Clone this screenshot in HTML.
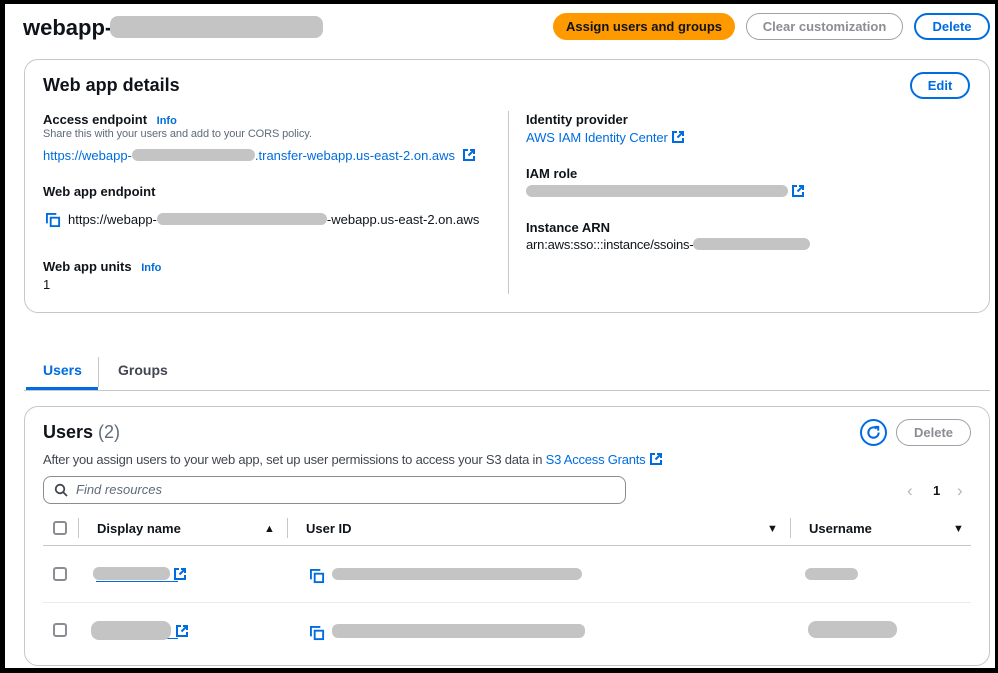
<!DOCTYPE html>
<html><head><meta charset="utf-8"><style>
*{box-sizing:border-box;margin:0;padding:0}
body{width:998px;height:673px;background:#000;position:relative;overflow:hidden;font-family:"Liberation Sans",sans-serif;color:#0f141a}
#pg{position:absolute;left:5px;top:4px;width:990px;height:664px;background:#fff}
.a{position:absolute;white-space:nowrap}
.b{font-weight:bold}
.lk{color:#006ce0}
.gr{position:absolute;background:#c4c4c4;border-radius:6px}
.ig{display:inline-block;background:#c4c4c4;border-radius:6px;height:12px;vertical-align:-1px}
.card{position:absolute;border:1px solid #c6c6cd;border-radius:14px;background:#fff}
.btn{position:absolute;border-radius:16px;font-weight:bold;font-size:13px;text-align:center;line-height:25px}
.ext{position:absolute;width:12px;height:12px}
.cb{position:absolute;width:14px;height:14px;border:2px solid #8c8c94;border-radius:3px}
.vd{position:absolute;width:1px;background:#c6c6cd}
</style></head><body>
<svg width="0" height="0" style="position:absolute"><defs>
<symbol id="ex" viewBox="0 0 12 12"><path d="M5 1H1v10h10V7" fill="none" stroke="#006ce0" stroke-width="2"/><path d="M7 1h4v4M11 1L5.5 6.5" fill="none" stroke="#006ce0" stroke-width="2"/></symbol>
<symbol id="cp" viewBox="0 0 16 16"><path d="M1 11V1h10" fill="none" stroke="#006ce0" stroke-width="2"/><rect x="5" y="5" width="9" height="9" fill="none" stroke="#006ce0" stroke-width="2"/></symbol>
</defs></svg>
<div id="pg">
<div class="a b" style="left:18px;top:11px;font-size:22px">webapp-</div>
<div class="gr" style="left:105px;top:12px;width:213px;height:22px;border-radius:8px"></div>
<div class="btn" style="left:548px;top:9px;width:182px;height:27px;background:#ff9900;color:#0f141a;line-height:27px">Assign users and groups</div>
<div class="btn" style="left:741px;top:9px;width:157px;height:27px;border:1px solid #a0a0a8;color:#8c8c94;line-height:25px">Clear customization</div>
<div class="btn" style="left:909px;top:9px;width:76px;height:27px;border:2px solid #006ce0;color:#006ce0;line-height:23px">Delete</div>

<div class="card" style="left:19px;top:55px;width:966px;height:254px"></div>
<div class="a b" style="left:38px;top:71px;font-size:18px">Web app details</div>
<div class="btn" style="left:905px;top:68px;width:60px;height:27px;border:2px solid #006ce0;color:#006ce0;line-height:23px">Edit</div>
<div class="a b" style="left:38px;top:108px;font-size:13px">Access endpoint <span class="lk" style="font-size:11px;margin-left:6px">Info</span></div>
<div class="a" style="left:38px;top:124px;font-size:11px;color:#5f6b7a;letter-spacing:-0.1px">Share this with your users and add to your CORS policy.</div>
<div class="a lk" style="left:38px;top:144px;font-size:13px">https://webapp-<span class="ig" style="width:123px"></span>.transfer-webapp.us-east-2.on.aws</div>
<svg class="ext" style="left:458px;top:145px"><use href="#ex"/></svg>
<div class="a b" style="left:38px;top:180px;font-size:13px">Web app endpoint</div>
<svg style="position:absolute;left:41px;top:209px;width:15px;height:15px"><use href="#cp"/></svg>
<div class="a" style="left:63px;top:208px;font-size:13px">https://webapp-<span class="ig" style="width:170px"></span>-webapp.us-east-2.on.aws</div>
<div class="a b" style="left:38px;top:255px;font-size:13px">Web app units <span class="lk" style="font-size:11px;margin-left:6px">Info</span></div>
<div class="a" style="left:38px;top:273px;font-size:13px">1</div>
<div class="vd" style="left:503px;top:107px;height:183px"></div>
<div class="a b" style="left:521px;top:108px;font-size:13px">Identity provider</div>
<div class="a lk" style="left:521px;top:126px;font-size:13px;letter-spacing:-0.1px">AWS IAM Identity Center</div>
<svg class="ext" style="left:667px;top:127px"><use href="#ex"/></svg>
<div class="a b" style="left:521px;top:162px;font-size:13px">IAM role</div>
<div class="gr" style="left:521px;top:181px;width:262px;height:12px"></div>
<svg class="ext" style="left:787px;top:181px"><use href="#ex"/></svg>
<div class="a b" style="left:521px;top:216px;font-size:13px">Instance ARN</div>
<div class="a" style="left:521px;top:233px;font-size:13px;letter-spacing:-0.2px">arn:aws:sso:::instance/ssoins-<span class="ig" style="width:117px"></span></div>

<div class="a b" style="left:38px;top:358px;font-size:14px;color:#006ce0">Users</div>
<div class="a b" style="left:113px;top:358px;font-size:14px;color:#424650">Groups</div>
<div class="vd" style="left:93px;top:353px;height:30px"></div>
<div style="position:absolute;left:19px;top:386px;width:966px;height:1px;background:#c6c6cd"></div>
<div style="position:absolute;left:21px;top:383px;width:72px;height:3px;background:#006ce0"></div>

<div class="card" style="left:19px;top:402px;width:966px;height:260px"></div>
<div class="a b" style="left:38px;top:418px;font-size:18px">Users <span style="font-weight:normal;color:#5f6b7a">(2)</span></div>
<div style="position:absolute;left:855px;top:415px;width:27px;height:27px;border:2px solid #006ce0;border-radius:50%"></div>
<svg style="position:absolute;left:861px;top:421px;width:15px;height:15px" viewBox="0 0 16 16"><path d="M13.5 8A5.5 5.5 0 1 1 11.5 3.8" fill="none" stroke="#006ce0" stroke-width="2.2"/><path d="M9 2h4v4" fill="none" stroke="#006ce0" stroke-width="2.2"/></svg>
<div class="btn" style="left:891px;top:415px;width:75px;height:27px;border:1px solid #a0a0a8;color:#8c8c94">Delete</div>
<div class="a" style="left:38px;top:448px;font-size:13px;color:#424650;letter-spacing:-0.22px">After you assign users to your web app, set up user permissions to access your S3 data in <span class="lk">S3 Access Grants</span></div>
<svg class="ext" style="left:645px;top:449px"><use href="#ex"/></svg>
<div style="position:absolute;left:38px;top:472px;width:583px;height:28px;border:1px solid #8c8c94;border-radius:8px"></div>
<svg style="position:absolute;left:49px;top:479px;width:14px;height:14px" viewBox="0 0 14 14"><circle cx="6" cy="6" r="4.3" fill="none" stroke="#424650" stroke-width="1.8"/><path d="M9 9l4 4" stroke="#424650" stroke-width="1.8"/></svg>
<div class="a" style="left:71px;top:478px;font-size:13px;font-style:italic;color:#5f6b7a">Find resources</div>
<div class="a" style="left:902px;top:477px;font-size:17px;color:#b4b4bb">‹</div>
<div class="a b" style="left:928px;top:479px;font-size:13px">1</div>
<div class="a" style="left:952px;top:477px;font-size:17px;color:#b4b4bb">›</div>

<div class="cb" style="left:48px;top:517px"></div>
<div class="vd" style="left:73px;top:514px;height:20px"></div>
<div class="a b" style="left:92px;top:517px;font-size:13px">Display name</div>
<div class="a" style="left:259px;top:519px;font-size:11px">▲</div>
<div class="vd" style="left:282px;top:514px;height:20px"></div>
<div class="a b" style="left:301px;top:517px;font-size:13px">User ID</div>
<div class="a" style="left:762px;top:519px;font-size:11px">▼</div>
<div class="vd" style="left:785px;top:514px;height:20px"></div>
<div class="a b" style="left:804px;top:517px;font-size:13px">Username</div>
<div class="a" style="left:948px;top:519px;font-size:11px">▼</div>
<div style="position:absolute;left:38px;top:541px;width:928px;height:1px;background:#c6c6cd"></div>
<div style="position:absolute;left:38px;top:598px;width:928px;height:1px;background:#e9ebed"></div>

<div class="cb" style="left:48px;top:563px"></div>
<div style="position:absolute;left:91px;top:577px;width:82px;height:1px;background:#006ce0"></div>
<div class="gr" style="left:88px;top:563px;width:77px;height:13px"></div>
<svg class="ext" style="left:169px;top:564px"><use href="#ex"/></svg>
<svg style="position:absolute;left:305px;top:565px;width:15px;height:15px"><use href="#cp"/></svg>
<div class="gr" style="left:327px;top:564px;width:250px;height:12px"></div>
<div class="gr" style="left:800px;top:564px;width:53px;height:12px"></div>

<div class="cb" style="left:48px;top:619px"></div>
<div style="position:absolute;left:91px;top:634px;width:82px;height:1px;background:#006ce0"></div>
<div class="gr" style="left:86px;top:617px;width:80px;height:19px;border-radius:8px"></div>
<svg class="ext" style="left:171px;top:621px"><use href="#ex"/></svg>
<svg style="position:absolute;left:305px;top:622px;width:15px;height:15px"><use href="#cp"/></svg>
<div class="gr" style="left:327px;top:620px;width:253px;height:14px"></div>
<div class="gr" style="left:803px;top:617px;width:89px;height:17px;border-radius:8px"></div>
</div>
</body></html>
